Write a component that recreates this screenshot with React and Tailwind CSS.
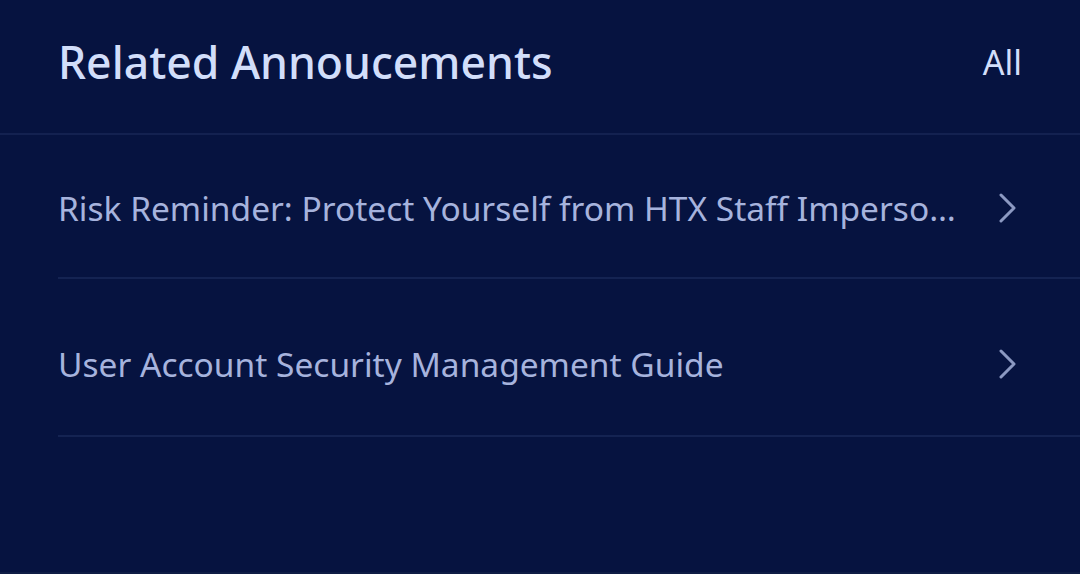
import React from "react";

function Chevron() {
  return (
    <svg width="20" height="30" viewBox="0 0 20 30" fill="none" className="shrink-0">
      <path d="M3 2 L16 15 L3 28" stroke="#8c99c2" strokeWidth="3" strokeLinecap="round" strokeLinejoin="round" />
    </svg>
  );
}

function Row({ text, cls }) {
  return (
    <div className={`ml-[58px] flex items-center border-b-2 border-[#142352] ${cls}`}>
      <span className="min-w-0 flex-1 truncate text-[33.5px] leading-[46px] text-[#a6b3dd]">{text}</span>
      <div className="ml-[30px] mr-[62px] flex items-center">
        <Chevron />
      </div>
    </div>
  );
}

export default function App() {
  return (
    <div
      className="flex h-[574px] w-[1080px] flex-col bg-[#061340]"
      style={{ fontFamily: '"Noto Sans", Inter, sans-serif' }}
    >
      <div className="flex h-[135px] items-center justify-between border-b-2 border-[#132150] pb-[10px] pl-[58px] pr-[58px]">
        <span className="text-[44.5px] leading-[56px] font-medium text-[#d2defa]">Related Annoucements</span>
        <span className="text-[34px] leading-[44px] text-[#d2defa]">All</span>
      </div>
      <Row text="Risk Reminder: Protect Yourself from HTX Staff Impersonation Scams" cls="h-[144px] pt-[3px]" />
      <Row text="User Account Security Management Guide" cls="h-[158px] pt-[14px]" />
      <div className="flex-1" />
      <div className="h-[2px] bg-[#0f1d45]" />
    </div>
  );
}
